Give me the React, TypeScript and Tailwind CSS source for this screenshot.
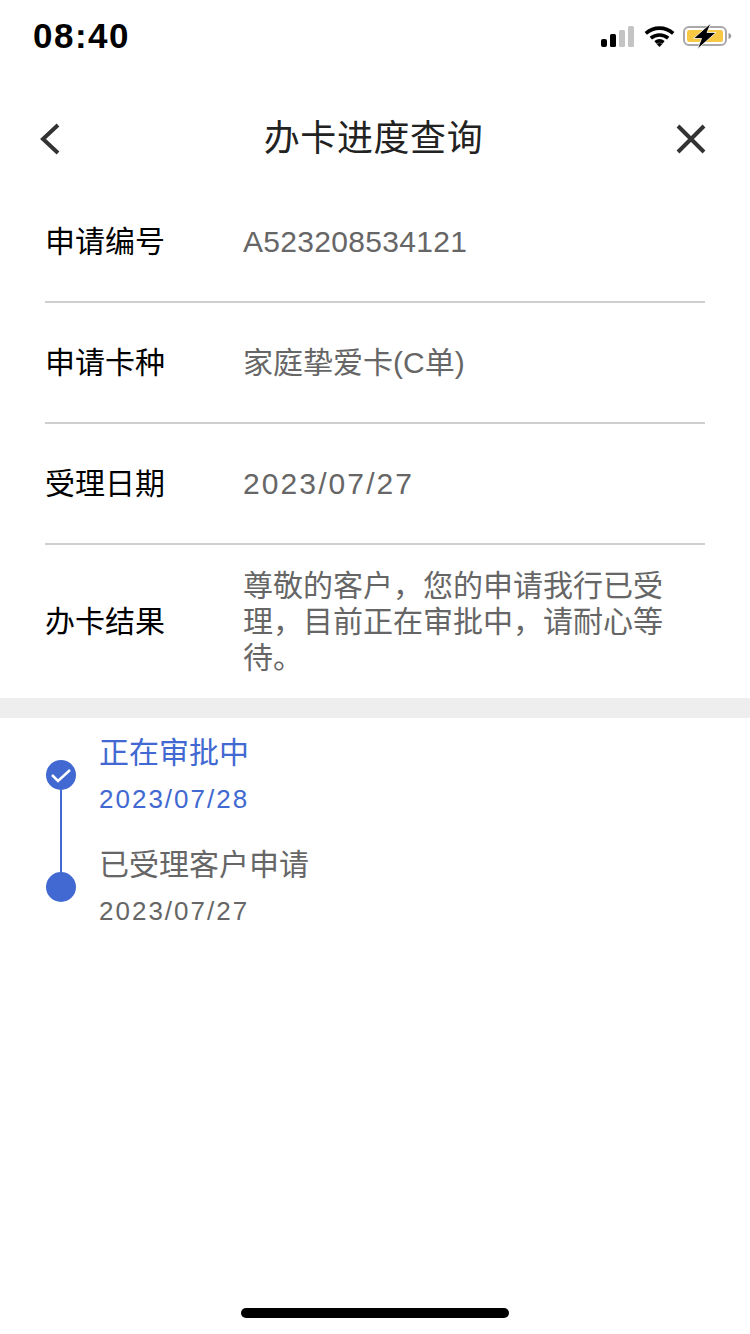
const font = "font-['Liberation_Sans','Noto_Sans_CJK_SC',sans-serif]";

function StatusIcons() {
  return (
    <div className="flex items-center">
      <svg width="34" height="21" viewBox="0 0 34 21" className="mr-[9px]">
        <rect x="0" y="13" width="6" height="8" rx="2" fill="#000" />
        <rect x="9" y="8" width="6" height="13" rx="1.5" fill="#000" />
        <rect x="18" y="4" width="6" height="17" rx="1.5" fill="#c4c4c4" />
        <rect x="27" y="0" width="6" height="21" rx="1.5" fill="#c4c4c4" />
      </svg>
      <svg width="31" height="21" viewBox="0 0 31 21" className="mr-[8px]" fill="none" stroke="#000" strokeWidth="3.6">
        <path d="M1.8 7.4C9.6 .4 21.4 .4 29.2 7.4" />
        <path d="M6.8 12.2C11.800 7.900 19.200 7.900 24.200 12.200" />
        <path d="M11.400 16.400C13.800 14.600 17.200 14.600 19.600 16.400" />
        <path d="M15.500 21L12.600 18Q15.500 16.200 18.400 18Z" fill="#000" stroke="none" />
      </svg>
      <svg width="50" height="26" viewBox="0 0 50 26">
        <rect x="1" y="4" width="42" height="18" rx="5" fill="#fff" stroke="#a9a9a9" strokeWidth="2" />
        <rect x="4" y="7" width="36" height="12" rx="2.500" fill="#f6c843" />
        <path d="M45.500 10v6c1.600-.5 2.800-1.700 2.800-3s-1.200-2.500-2.800-3z" fill="#9a9a9a" />
        <path d="M28 0L10.500 15.500H18.500L14.500 26L33 9.500H24Z" fill="#000" stroke="#fff" strokeWidth="0.800" />
      </svg>
    </div>
  );
}

function InfoRow({ label, value, valueClass }: { label: string; value: string; valueClass?: string }) {
  return (
    <div className="flex h-[121px] items-center border-b-2 border-[#cfcfcf]">
      <div className="w-[198px] text-[30px] text-black">{label}</div>
      <div className={`text-[30px] text-[#666] ${valueClass ?? ""}`}>{value}</div>
    </div>
  );
}

export default function App() {
  return (
    <div className={`${font} relative h-[1334px] w-[750px] overflow-hidden bg-white`}>
      <div className="flex h-[96px] items-start justify-between pl-[33px] pr-[17px]">
        <div className="mt-[12px] text-[35px] leading-[48px] font-bold tracking-[1.500px] text-black">08:40</div>
        <div className="mt-[23px]">
          <StatusIcons />
        </div>
      </div>

      <div className="flex h-[86px] items-center justify-between pl-[38px] pr-[44px]">
        <svg width="33" height="34" viewBox="0 0 33 34" fill="none" stroke="#333" strokeWidth="4">
          <path d="M20 3L5 17L20 31" />
        </svg>
        <div className="text-[36px] tracking-[0.600px] text-[#222]">办卡进度查询</div>
        <svg width="30" height="30" viewBox="0 0 30 30" fill="none" stroke="#333" strokeWidth="4">
          <path d="M2 2L28 28M28 2L2 28" />
        </svg>
      </div>

      <div className="px-[45px]">
        <InfoRow label="申请编号" value="A523208534121" valueClass="tracking-[0.300px]" />
        <InfoRow label="申请卡种" value="家庭挚爱卡(C单)" />
        <InfoRow label="受理日期" value="2023/07/27" valueClass="tracking-[2.100px]" />
        <div className="flex h-[153px] items-center">
          <div className="w-[198px] text-[30px] text-black">办卡结果</div>
          <div className="w-[426px] text-[30px] leading-[36px] text-[#666]">
            {"尊敬的客户\uFF0C您的申请我行已受理\uFF0C目前正在审批中\uFF0C请耐心等待。"}
          </div>
        </div>
      </div>

      <div className="h-[20px] bg-[#eeeeee]" />

      <div className="flex pl-[46px] pt-[13px]">
        <div className="mr-[24px] flex w-[30px] flex-col items-center pt-[29px]">
          <div className="flex h-[30px] w-[30px] items-center justify-center rounded-full bg-[#4169d1]">
            <svg width="22" height="16" viewBox="0 0 22 16" fill="none" stroke="#fff" strokeWidth="2.500">
              <path d="M2 8L8 14L20 3" />
            </svg>
          </div>
          <div className="h-[82px] w-[2px] bg-[#4169d1]" />
          <div className="h-[30px] w-[30px] rounded-full bg-[#4169d1]" />
        </div>
        <div className="-ml-[1px] flex flex-col">
          <div className="pb-[20px]">
            <div className="text-[30px] leading-[44px] text-[#4169d1]">正在审批中</div>
            <div className="text-[26px] leading-[48px] tracking-[2px] text-[#4169d1]">2023/07/28</div>
          </div>
          <div>
            <div className="text-[30px] leading-[44px] text-[#666]">已受理客户申请</div>
            <div className="text-[26px] leading-[48px] tracking-[2px] text-[#666]">2023/07/27</div>
          </div>
        </div>
      </div>

      <div className="absolute bottom-[16px] left-[241px] h-[10px] w-[268px] rounded-full bg-black" />
    </div>
  );
}
